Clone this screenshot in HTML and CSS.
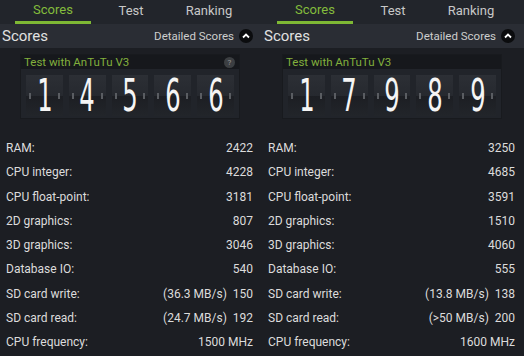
FILE: index.html
```html
<!DOCTYPE html>
<html lang="en">
<head>
	<meta charset="UTF-8">
	<title>AnTuTu Scores</title>
	<link rel="stylesheet" href="styles.css">
</head>
<body>
	<div class="screen">
		<div class="panel">
			<div class="tabs">
				<div class="tab active">Scores</div>
				<div class="tab">Test</div>
				<div class="tab">Ranking</div>
			</div>
			<div class="header">
				<span class="title">Scores</span>
				<span class="detail">Detailed Scores <span class="chevron"><svg width="14" height="14" viewBox="0 0 14 14"><circle cx="7" cy="7" r="7" fill="#0b0c0e"/><path d="M4 8.5 L7 5.5 L10 8.5" stroke="#fff" stroke-width="1.8" fill="none"/></svg></span></span>
			</div>
			<div class="card">
				<div class="cardhead">Test with AnTuTu V3 <span class="help">?</span></div>
				<div class="tiles">
					<div class="tile"><span>1</span></div>
					<div class="tile"><span>4</span></div>
					<div class="tile"><span>5</span></div>
					<div class="tile"><span>6</span></div>
					<div class="tile"><span>6</span></div>
				</div>
			</div>
			<div class="rows">
				<div class="row"><span>RAM:</span><span>2422</span></div>
				<div class="row"><span>CPU integer:</span><span>4228</span></div>
				<div class="row"><span>CPU float-point:</span><span>3181</span></div>
				<div class="row"><span>2D graphics:</span><span>807</span></div>
				<div class="row"><span>3D graphics:</span><span>3046</span></div>
				<div class="row"><span>Database IO:</span><span>540</span></div>
				<div class="row"><span>SD card write:</span><span>(36.3 MB/s)&nbsp; 150</span></div>
				<div class="row"><span>SD card read:</span><span>(24.7 MB/s)&nbsp; 192</span></div>
				<div class="row"><span>CPU frequency:</span><span>1500 MHz</span></div>
			</div>
		</div>
		<div class="panel">
			<div class="tabs">
				<div class="tab active">Scores</div>
				<div class="tab">Test</div>
				<div class="tab">Ranking</div>
			</div>
			<div class="header">
				<span class="title">Scores</span>
				<span class="detail">Detailed Scores <span class="chevron"><svg width="14" height="14" viewBox="0 0 14 14"><circle cx="7" cy="7" r="7" fill="#0b0c0e"/><path d="M4 8.5 L7 5.5 L10 8.5" stroke="#fff" stroke-width="1.8" fill="none"/></svg></span></span>
			</div>
			<div class="card">
				<div class="cardhead">Test with AnTuTu V3</div>
				<div class="tiles">
					<div class="tile"><span>1</span></div>
					<div class="tile"><span>7</span></div>
					<div class="tile"><span>9</span></div>
					<div class="tile"><span>8</span></div>
					<div class="tile"><span>9</span></div>
				</div>
			</div>
			<div class="rows">
				<div class="row"><span>RAM:</span><span>3250</span></div>
				<div class="row"><span>CPU integer:</span><span>4685</span></div>
				<div class="row"><span>CPU float-point:</span><span>3591</span></div>
				<div class="row"><span>2D graphics:</span><span>1510</span></div>
				<div class="row"><span>3D graphics:</span><span>4060</span></div>
				<div class="row"><span>Database IO:</span><span>555</span></div>
				<div class="row"><span>SD card write:</span><span>(13.8 MB/s)&nbsp; 138</span></div>
				<div class="row"><span>SD card read:</span><span>(&gt;50 MB/s)&nbsp; 200</span></div>
				<div class="row"><span>CPU frequency:</span><span>1600 MHz</span></div>
			</div>
		</div>
	</div>
</body>
</html>
```

FILE: styles.css
```css
body {
	margin: 0;
	background-color: rgb(28, 30, 35);
	font-family: Roboto, "Liberation Sans", sans-serif;
	color: rgb(220, 220, 220);
}

.screen {
	display: flex;
	width: 524px;
	height: 356px;
	overflow: hidden;
}

.panel {
	width: 262px;
	flex: none;
}

.tabs {
	display: flex;
	height: 24px;
	padding: 0 14px 0 14px;
	background-color: rgb(34, 37, 43);
}

.tab {
	flex: 1;
	text-align: center;
	font-size: 13px;
	line-height: 22px;
	color: rgb(200, 200, 200);
	margin: 0 1px;
}

.tab.active {
	color: rgb(132, 188, 60);
	border-bottom: 3px solid rgb(126, 184, 52);
	line-height: 20px;
	height: 21px;
}

.header {
	display: flex;
	justify-content: space-between;
	align-items: center;
	height: 24px;
	padding: 0 9px 0 2px;
	background-color: rgb(42, 45, 52);
}

.title {
	font-size: 15px;
	color: rgb(225, 225, 225);
}

.detail {
	display: flex;
	align-items: center;
	font-size: 11.5px;
	color: rgb(205, 205, 205);
}

.chevron {
	display: inline-block;
	height: 14px;
	margin-left: 5px;
}

.card {
	margin: 6px 22px 0 20px;
	background-color: rgb(33, 36, 42);
	border: 1px solid rgb(24, 26, 30);
	height: 63px;
}

.cardhead {
	display: flex;
	justify-content: space-between;
	align-items: center;
	height: 14px;
	padding: 0 4px 0 3px;
	font-size: 11.5px;
	color: rgb(130, 176, 60);
	background-color: rgb(22, 24, 28);
}

.help {
	display: inline-block;
	width: 11px;
	height: 11px;
	border-radius: 6px;
	background-color: rgb(60, 63, 66);
	color: rgb(150, 150, 150);
	font-size: 8px;
	line-height: 11px;
	text-align: center;
}

.tiles {
	display: flex;
	gap: 6px;
	padding: 6px 5px 0 5px;
}

.tile {
	position: relative;
	width: 37px;
	height: 41px;
	background: linear-gradient(rgb(44, 47, 53) 0, rgb(38, 41, 47) 50%, rgb(28, 30, 35) 50%, rgb(34, 37, 42) 100%);
	text-align: center;
}

.tile::before, .tile::after {
	content: "";
	position: absolute;
	top: 18px;
	width: 2px;
	height: 6px;
	background-color: rgb(90, 93, 98);
}

.tile::before {
	left: 3px;
}

.tile::after {
	right: 3px;
}

.tile span {
	display: inline-block;
	font-family: "DejaVu Sans Condensed", "Liberation Sans Narrow", sans-serif;
	font-size: 45px;
	line-height: 41px;
	height: 41px;
	color: rgb(245, 245, 245);
	transform: scale(0.6, 1);
}

.rows {
	padding: 17px 9px 0 6px;
}

.row {
	display: flex;
	justify-content: space-between;
	height: 24.3px;
	line-height: 24px;
	font-size: 12px;
}
```
